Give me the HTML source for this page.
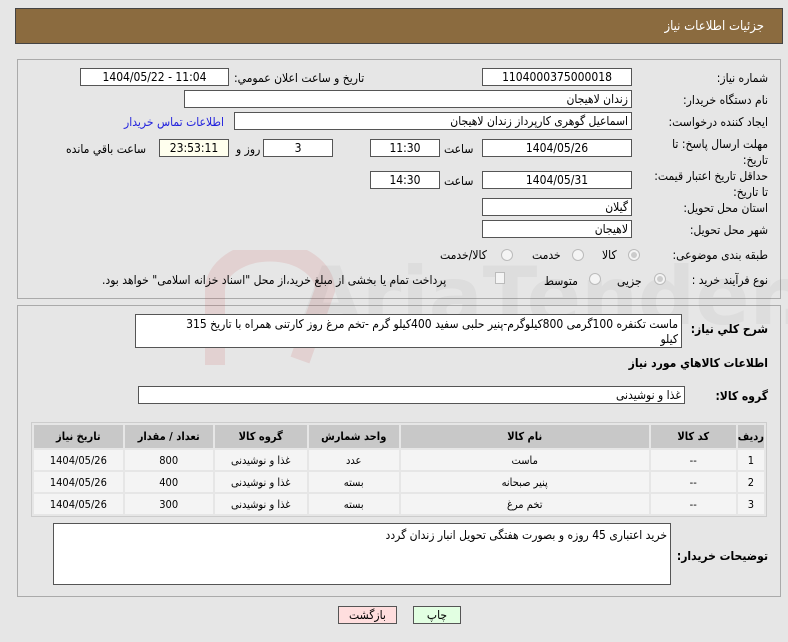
<!DOCTYPE html>
<html><head><meta charset="utf-8"><style>
*{box-sizing:border-box;margin:0;padding:0}
body{width:788px;height:642px;background:#e6e6e6;font-family:"DejaVu Sans Condensed","DejaVu Sans",sans-serif;font-size:12px;color:#000;position:relative;overflow:hidden}
.a{position:absolute}
.hdr{left:15px;top:8px;width:768px;height:36px;background:#8b6b3f;border:1px solid #444;color:#fff;font-size:13px;text-align:right;padding:10px 18px 0 0}
.panel{border:1px solid #aaa;background:#e6e6e6}
.box{position:absolute;background:#fff;border:1px solid #555;height:18px;line-height:16px;text-align:center;font-size:12px;white-space:nowrap;overflow:hidden}
.r{text-align:right;padding-right:3px;direction:rtl}
.lb{position:absolute;direction:rtl;text-align:right;white-space:nowrap;font-size:12px}
table{border-collapse:separate;border-spacing:2px;font-size:11px}
th{background:#c8c8c8;height:23px;font-weight:bold;font-size:11px}
td{background:#f4f4f4;height:20px;text-align:center}
.rad{position:absolute;width:12px;height:12px;border:1px solid #bbb;border-radius:50%;background:#f4f4f4}
.wm{position:absolute;font-family:"DejaVu Sans",sans-serif;font-weight:bold;font-size:80px;color:rgba(120,120,120,.08);left:300px;top:250px;white-space:nowrap}
</style></head><body>
<div class="a hdr" dir="rtl">جزئیات اطلاعات نیاز</div>

<div class="a panel" style="left:17px;top:59px;width:764px;height:240px"></div>
<div class="a panel" style="left:17px;top:305px;width:764px;height:292px"></div>

<svg class="a" style="left:200px;top:250px" width="140" height="130"><path d="M15 115 V40 a50 35 0 0 1 110 0 L100 110" fill="none" stroke="rgba(200,60,60,.12)" stroke-width="20"/></svg>
<div class="wm">AriaTender.neT</div>

<div class="lb" style="right:20px;top:71px">شماره نیاز:</div>
<div class="box" style="left:482px;top:68px;width:150px">1104000375000018</div>
<div class="lb" style="left:234px;top:71px">تاریخ و ساعت اعلان عمومي:</div>
<div class="box" style="left:80px;top:68px;width:149px">1404/05/22 - 11:04</div>

<div class="lb" style="right:20px;top:93px">نام دستگاه خریدار:</div>
<div class="box r" style="left:184px;top:90px;width:448px">زندان لاهیجان</div>

<div class="lb" style="right:20px;top:115px">ایجاد کننده درخواست:</div>
<div class="box r" style="left:234px;top:112px;width:398px">اسماعیل گوهری کارپرداز زندان لاهیجان</div>
<div class="lb" style="left:124px;top:115px;color:#2222dd">اطلاعات تماس خریدار</div>

<div class="lb" style="right:20px;top:136px;line-height:16px">مهلت ارسال پاسخ: تا<br>تاریخ:</div>
<div class="box" style="left:482px;top:139px;width:150px">1404/05/26</div>
<div class="lb" style="left:444px;top:142px">ساعت</div>
<div class="box" style="left:370px;top:139px;width:70px">11:30</div>
<div class="box" style="left:263px;top:139px;width:70px">3</div>
<div class="lb" style="left:236px;top:142px">روز و</div>
<div class="box" style="left:159px;top:139px;width:70px;background:#ffffee">23:53:11</div>
<div class="lb" style="left:66px;top:142px">ساعت باقي مانده</div>

<div class="lb" style="right:20px;top:168px;line-height:16px">حداقل تاریخ اعتبار قیمت:<br>تا تاریخ:</div>
<div class="box" style="left:482px;top:171px;width:150px">1404/05/31</div>
<div class="lb" style="left:444px;top:174px">ساعت</div>
<div class="box" style="left:370px;top:171px;width:70px">14:30</div>

<div class="lb" style="right:20px;top:201px">استان محل تحویل:</div>
<div class="box r" style="left:482px;top:198px;width:150px">گیلان</div>
<div class="lb" style="right:20px;top:223px">شهر محل تحویل:</div>
<div class="box r" style="left:482px;top:220px;width:150px">لاهیجان</div>

<div class="lb" style="right:20px;top:248px">طبقه بندی موضوعی:</div>
<div class="rad" style="left:628px;top:249px"><div style="width:6px;height:6px;margin:2px;border-radius:50%;background:#ccc"></div></div>
<div class="lb" style="left:602px;top:248px">کالا</div>
<div class="rad" style="left:572px;top:249px"></div>
<div class="lb" style="left:532px;top:248px">خدمت</div>
<div class="rad" style="left:501px;top:249px"></div>
<div class="lb" style="left:440px;top:248px">کالا/خدمت</div>

<div class="lb" style="right:20px;top:273px">نوع فرآیند خرید :</div>
<div class="rad" style="left:654px;top:273px"><div style="width:6px;height:6px;margin:2px;border-radius:50%;background:#ccc"></div></div>
<div class="lb" style="left:617px;top:274px">جزیی</div>
<div class="rad" style="left:589px;top:273px"></div>
<div class="lb" style="left:544px;top:274px">متوسط</div>
<div class="a" style="left:495px;top:272px;width:10px;height:12px;border:1px solid #bbb;background:#f4f4f4"></div>
<div class="lb" style="left:102px;top:273px">پرداخت تمام یا بخشی از مبلغ خرید،از محل "اسناد خزانه اسلامی" خواهد بود.</div>

<div class="lb" style="right:20px;top:322px;font-weight:bold">شرح کلي نياز:</div>
<div class="box r" style="left:135px;top:314px;width:547px;height:34px;line-height:15px;text-align:right;white-space:normal;padding:2px 3px 0 30px">ماست تکنفره 100گرمی 800کیلوگرم-پنیر حلبی سفید 400کیلو گرم -تخم مرغ روز کارتنی همراه با تاریخ 315 کیلو</div>
<div class="lb" style="right:20px;top:356px;font-weight:bold">اطلاعات كالاهاي مورد نياز</div>

<div class="lb" style="right:20px;top:389px;font-weight:bold">گروه کالا:</div>
<div class="box r" style="left:138px;top:386px;width:547px">غذا و نوشیدنی</div>

<div class="a" style="left:31px;top:422px;width:736px;height:95px;border:1px solid #ccc">
<table dir="rtl" style="width:734px">
<tr><th style="width:26px">ردیف</th><th style="width:85px">کد کالا</th><th style="width:248px">نام کالا</th><th style="width:90px">واحد شمارش</th><th style="width:92px">گروه کالا</th><th style="width:88px">تعداد / مقدار</th><th>تاریخ نیاز</th></tr>
<tr><td>1</td><td>--</td><td>ماست</td><td>عدد</td><td>غذا و نوشیدنی</td><td>800</td><td>1404/05/26</td></tr>
<tr><td>2</td><td>--</td><td>پنیر صبحانه</td><td>بسته</td><td>غذا و نوشیدنی</td><td>400</td><td>1404/05/26</td></tr>
<tr><td>3</td><td>--</td><td>تخم مرغ</td><td>بسته</td><td>غذا و نوشیدنی</td><td>300</td><td>1404/05/26</td></tr>
</table></div>

<div class="box r" style="left:53px;top:523px;width:618px;height:62px;text-align:right;line-height:15px;padding-top:4px">خرید اعتباری 45 روزه و  بصورت هفتگی تحویل انبار زندان گردد</div>
<div class="lb" style="right:20px;top:549px;font-weight:bold">توضیحات خریدار:</div>

<div class="a" style="left:338px;top:606px;width:59px;height:18px;background:#ffdede;border:1px solid #555;text-align:center;line-height:16px">بازگشت</div>
<div class="a" style="left:413px;top:606px;width:48px;height:18px;background:#e2ffe2;border:1px solid #555;text-align:center;line-height:16px">چاپ</div>
</body></html>
